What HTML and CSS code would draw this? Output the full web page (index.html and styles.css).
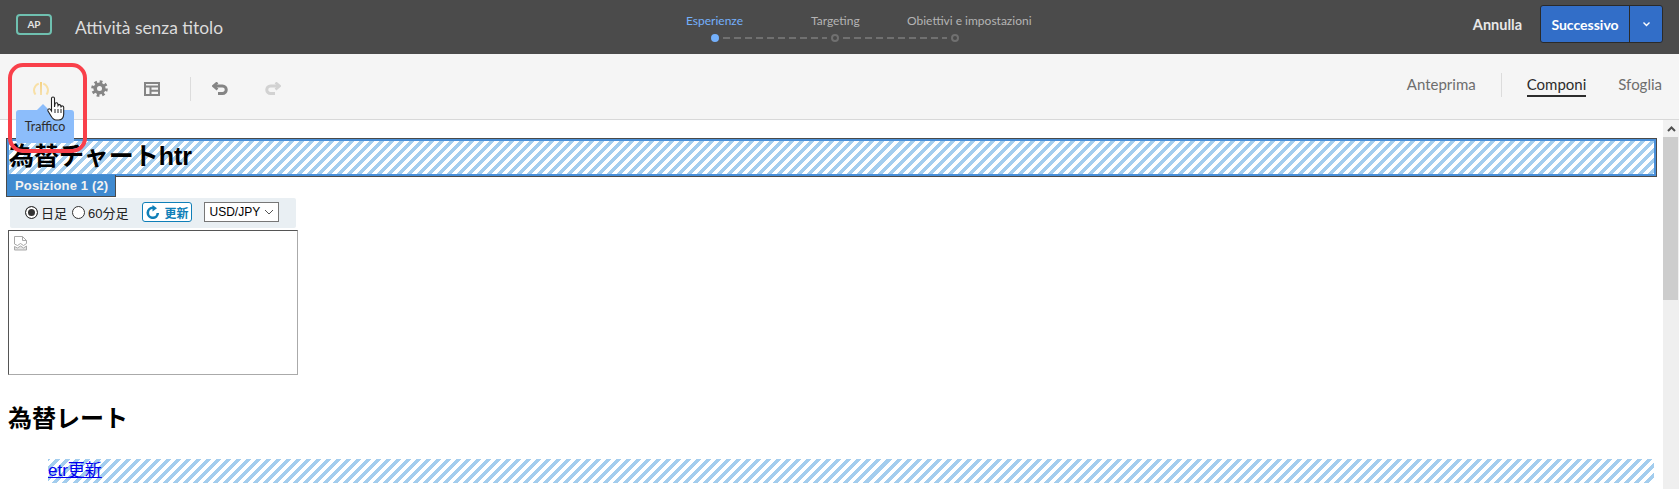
FILE: index.html
```html
<!DOCTYPE html>
<html lang="it">
<head>
    <meta charset="UTF-8">
    <title>Attività senza titolo</title>
    <link rel="stylesheet" href="styles.css">
</head>
<body>
    <header class="topbar">
        <div class="topbar-left">
            <span class="ap-badge">AP</span>
            <span class="activity-title">Attività senza titolo</span>
        </div>
        <div class="stepper">
            <div class="step-labels">
                <span class="step-label step-label-active">Esperienze</span>
                <span class="step-label">Targeting</span>
                <span class="step-label">Obiettivi e impostazioni</span>
            </div>
            <div class="step-track">
                <span class="step-dot step-dot-active"></span>
                <span class="step-line"></span>
                <span class="step-dot"></span>
                <span class="step-line"></span>
                <span class="step-dot"></span>
            </div>
        </div>
        <div class="topbar-right">
            <span class="cancel">Annulla</span>
            <div class="next-btn">
                <span class="next-label">Successivo</span>
                <span class="next-arrow">
                    <svg width="9" height="6" viewBox="0 0 9 6"><path d="M1.500 1.500 4.500 4.500 7.500 1.500" fill="none" stroke="#fff" stroke-width="1.400"/></svg>
                </span>
            </div>
        </div>
    </header>

    <div class="toolbar">
        <div class="tools">
            <span class="tool tool-traffic">
                <svg width="16" height="13" viewBox="0 0 16 13"><path d="M2.500 12.500A7 7 0 0 1 5.800 1.600M13.500 12.500A7 7 0 0 0 10.200 1.600" fill="none" stroke="#f8e0a6" stroke-width="2"/><path d="M7 0h2l-.4 13h-1.200z" fill="#f5d283"/></svg>
            </span>
            <span class="tool">
                <svg width="17" height="17" viewBox="0 0 17 17"><circle cx="8.500" cy="8.500" r="4.300" fill="none" stroke="#858585" stroke-width="3.600"/><circle cx="8.500" cy="8.500" r="6.800" fill="none" stroke="#858585" stroke-width="3" stroke-dasharray="2.670 2.670"/></svg>
            </span>
            <span class="tool">
                <svg width="16" height="14" viewBox="0 0 16 14"><path d="M1 1h14v12H1zM1 4.500h14M6.500 4.500V13M6.500 8.800H15" fill="none" stroke="#858585" stroke-width="2"/></svg>
            </span>
            <span class="tool-sep"></span>
            <span class="tool">
                <svg width="16" height="13" viewBox="0 0 16 13"><path d="M5.500 .5 1.500 4l4 3.500" fill="none" stroke="#858585" stroke-width="2.600"/><path d="M2 4h8.500a3.500 3.500 0 0 1 0 7.500H6" fill="none" stroke="#858585" stroke-width="3"/></svg>
            </span>
            <span class="tool">
                <svg width="16" height="13" viewBox="0 0 16 13"><path d="M10.500 .5l4 3.500-4 3.500" fill="none" stroke="#d2d2d2" stroke-width="2.600"/><path d="M14 4H5.500a3.500 3.500 0 0 0 0 7.500H10" fill="none" stroke="#d2d2d2" stroke-width="3"/></svg>
            </span>
        </div>
        <nav class="view-tabs">
            <span class="view-tab">Anteprima</span>
            <span class="view-sep"></span>
            <span class="view-tab view-tab-active">Componi</span>
            <span class="view-tab">Sfoglia</span>
        </nav>
    </div>

    <main class="stage">
        <div class="page">
            <div class="zone-title">
                <h1 class="page-h1">為替チャートhtr</h1>
            </div>
            <div class="zone-tag">Posizione 1 (2)</div>
            <div class="chart-controls">
                <label class="radio-item"><span class="radio radio-on"></span>日足</label>
                <label class="radio-item"><span class="radio"></span>60分足</label>
                <span class="refresh-btn">
                    <svg width="14" height="14" viewBox="0 0 14 14"><path d="M11.800 8A5 5 0 1 1 7 2.800" fill="none" stroke="#0f7fb8" stroke-width="2.600"/><path d="M6.500 0v6.500l4.500-3.200z" fill="#0f7fb8"/></svg>
                    更新
                </span>
                <span class="pair-select">USD/JPY
                    <svg width="10" height="6" viewBox="0 0 10 6"><path d="M1 1l4 4 4-4" fill="none" stroke="#555"/></svg>
                </span>
            </div>
            <div class="chart-box">
                <svg class="broken-img" width="13" height="15" viewBox="0 0 13 15"><path d="M.5.500h8l4 4v3l-3 2-3-2-3 2-3-1.500z" fill="#fff" stroke="#a9a9a9"/><path d="M8.500.5v4h4" fill="none" stroke="#a9a9a9"/><path d="M.5 10.500l3 1.500 3-2 3 2 3-2v4H.5z" fill="#e4e4e4" stroke="#a9a9a9"/></svg>
            </div>
            <h2 class="rate-heading">為替レート</h2>
            <div class="rate-row"><a class="rate-link" href="#">etr更新</a></div>
        </div>
        <div class="scrollbar">
            <span class="scroll-up">
                <svg width="9" height="6" viewBox="0 0 9 6"><path d="M1 5l3.500-3.500L8 5" fill="none" stroke="#505050" stroke-width="2"/></svg>
            </span>
            <span class="scroll-thumb"></span>
        </div>
    </main>

    <div class="traffic-tip">Traffico</div>
    <div class="callout"></div>
    <svg class="hand-cursor" width="22" height="26" viewBox="0 0 22 26"><path d="M5.500 2.500a1.500 1.500 0 0 1 3 0V11l.5-3a1.400 1.400 0 0 1 2.800.2l.2 1.300a1.400 1.400 0 0 1 2.700.3l.3 1a1.400 1.400 0 0 1 2.700.5V18c0 3.500-2 6-5 6H10c-2.500 0-3.500-1.500-5-4l-3-5c-.8-1.500 1-3 2.300-1.700L5.500 15z" fill="#fff" stroke="#222" stroke-width="1.100"/><path d="M9 13v4M12 13v4M15 13v4" stroke="#222"/></svg>
</body>
</html>
```

FILE: styles.css
```css
html, body {
    margin: 0;
    padding: 0;
    height: 489px;
    overflow: hidden;
}

body {
    position: relative;
    display: flex;
    flex-direction: column;
    font-family: Lato, "Open Sans", sans-serif;
    background-color: #fff;
}

/* top bar */
.topbar {
    height: 54px;
    flex: none;
    display: flex;
    align-items: center;
    background-color: #4b4b4b;
    position: relative;
}

.topbar-left {
    display: flex;
    align-items: center;
    padding-left: 16px;
}

.ap-badge {
    box-sizing: border-box;
    width: 36px;
    height: 21px;
    margin-top: -6px;
    border: 2px solid #6fc0b0;
    border-radius: 4px;
    color: #e4e4e4;
    font-size: 10px;
    font-weight: 700;
    display: flex;
    align-items: center;
    justify-content: center;
}

.activity-title {
    margin-left: 23px;
    font-size: 17.400px;
    color: #dcdcdc;
}

.stepper {
    position: absolute;
    left: 686px;
    top: 12px;
    width: 350px;
}

.step-labels {
    display: flex;
    font-size: 12px;
    line-height: 17px;
    color: #b4b4b4;
    white-space: nowrap;
}

.step-label:nth-child(1) { width: 125px; }
.step-label:nth-child(2) { width: 96px; }

.step-label-active {
    color: #74b0fb;
}

.step-track {
    display: flex;
    align-items: center;
    margin: 5px 0 0 25px;
    width: 248px;
}

.step-dot {
    box-sizing: border-box;
    width: 8px;
    height: 8px;
    border: 2px solid #707070;
    border-radius: 50%;
    flex: none;
}

.step-dot-active {
    background-color: #74b0fb;
    border-color: #74b0fb;
}

.step-line {
    flex: 1;
    height: 2px;
    margin: 0 4px;
    background: repeating-linear-gradient(90deg, #707070 0, #707070 7px, transparent 7px, transparent 11px);
}

.topbar-right {
    margin-left: auto;
    display: flex;
    align-items: center;
    padding-right: 16px;
    margin-top: -6px;
}

.cancel {
    color: #e8e8e8;
    font-size: 14.500px;
    font-weight: 700;
    margin-right: 18px;
}

.next-btn {
    display: flex;
    height: 38px;
    background-color: #326ec8;
    border: 1px solid #2a2a2a;
    border-radius: 3px;
    box-sizing: border-box;
    color: #fff;
    font-size: 14px;
    font-weight: 700;
}

.next-label {
    width: 88px;
    display: flex;
    align-items: center;
    justify-content: center;
    border-right: 1px solid #2a2a2a;
}

.next-arrow {
    width: 32px;
    display: flex;
    align-items: center;
    justify-content: center;
}

/* toolbar */
.toolbar {
    height: 65px;
    flex: none;
    display: flex;
    align-items: center;
    justify-content: space-between;
    background-color: #f5f5f5;
    border-bottom: 1px solid #d8d8d8;
}

.tools {
    display: flex;
    align-items: center;
    padding-left: 32px;
    margin-top: 4px;
}

.tool {
    display: flex;
    justify-content: center;
    width: 18px;
    margin-right: 35px;
}

.tool-traffic {
    margin-right: 40px;
}

.tool-sep {
    width: 1px;
    height: 24px;
    background-color: #dcdcdc;
    margin: 0 20px 0 -6px;
}

.view-tabs {
    display: flex;
    align-items: center;
    padding-right: 17px;
    font-size: 15px;
    color: #6e6e6e;
    margin-top: -4px;
}

.view-tab {
    padding: 3px 0 2px;
    border-bottom: 2px solid transparent;
}

.view-sep {
    width: 1px;
    height: 24px;
    background-color: #dcdcdc;
    margin: 0 25px;
}

.view-tab-active {
    color: #2c2c2c;
    border-bottom-color: #2c2c2c;
    margin-right: 32px;
}

/* page preview */
.stage {
    flex: 1;
    display: flex;
    min-height: 0;
    overflow: hidden;
}

.page {
    flex: 1;
    min-width: 0;
    padding: 18px 6px 0 6px;
    font-family: "Liberation Sans", "Noto Sans CJK JP", sans-serif;
    color: #000;
}

.zone-title {
    height: 39px;
    box-sizing: border-box;
    border: 1px solid #4a4a4a;
    box-shadow: inset 0 0 0 2px #4a90d9;
    padding: 1px 0 0 2px;
    background: repeating-linear-gradient(-45deg, #fff 0, #fff 3.540px, #a3cdee 3.540px, #a3cdee 7.080px);
}

.page-h1 {
    margin: 0;
    font-size: 25px;
    line-height: 32px;
    font-weight: 700;
}

.zone-tag {
    position: relative;
    width: 110px;
    height: 22px;
    margin-top: -2px;
    box-sizing: border-box;
    padding: 1px 0 0 8px;
    background-color: #3f8ad0;
    border: 1px solid #4a4a4a;
    border-top: 0;
    color: #f2f2f2;
    font-size: 13px;
    font-weight: 700;
    line-height: 19px;
    letter-spacing: 0.15px;
}

.chart-controls {
    display: flex;
    align-items: center;
    width: 286px;
    height: 30px;
    margin: 1px 0 2px 4px;
    padding: 0 0 2px 15px;
    box-sizing: border-box;
    background-color: #e9eff3;
    border-radius: 2px;
    font-size: 13px;
    color: #222;
}

.radio-item {
    display: flex;
    align-items: center;
    margin-right: 5px;
}

.radio {
    box-sizing: border-box;
    width: 13px;
    height: 13px;
    margin-right: 3px;
    border: 1px solid #333;
    border-radius: 50%;
    background-color: #fff;
}

.radio-on {
    background-color: #333;
    box-shadow: inset 0 0 0 2px #fff;
}

.refresh-btn {
    display: flex;
    align-items: center;
    gap: 4px;
    box-sizing: border-box;
    height: 20px;
    width: 50px;
    margin-left: 9px;
    padding-left: 3px;
    border: 1px solid #0f7fb8;
    border-radius: 3px;
    background-color: #fff;
    color: #0f7fb8;
    font-size: 12px;
    font-weight: 700;
}

.pair-select {
    display: flex;
    align-items: center;
    justify-content: space-between;
    box-sizing: border-box;
    width: 75px;
    height: 20px;
    margin-left: 12px;
    padding: 0 4px;
    border: 1px solid #777;
    background-color: #fff;
    color: #000;
    font-size: 12px;
}

.chart-box {
    width: 290px;
    height: 145px;
    margin-left: 2px;
    box-sizing: border-box;
    border: 1px solid;
    border-color: #555 #aaa #aaa #555;
    padding: 5px;
    background-color: #fff;
}

.broken-img {
    display: block;
}

.rate-heading {
    margin: 29px 0 0 2px;
    font-size: 24px;
    line-height: 30px;
    font-weight: 700;
}

.rate-row {
    margin: 25px 3px 0 42px;
    height: 24px;
    line-height: 24px;
    font-size: 17px;
    background: repeating-linear-gradient(-45deg, #fff 0, #fff 3.540px, #a3cdee 3.540px, #a3cdee 7.080px);
}

.rate-link {
    color: #0000ee;
}

.scrollbar {
    width: 16px;
    flex: none;
    display: flex;
    flex-direction: column;
    background-color: #efefef;
}

.scroll-up {
    height: 17px;
    flex: none;
    display: flex;
    align-items: center;
    justify-content: center;
    background-color: #f2f2f2;
}

.scroll-thumb {
    height: 163px;
    margin-right: 1px;
    background-color: #cdcdcd;
}

/* things lying over the page */
.traffic-tip {
    position: absolute;
    left: 16px;
    top: 110px;
    width: 58px;
    height: 33px;
    box-sizing: border-box;
    padding-top: 9px;
    background-color: #8cbdfb;
    border-radius: 3px;
    color: #2c2c2c;
    font-size: 12.500px;
    text-align: center;
}

.traffic-tip::before {
    content: "";
    position: absolute;
    left: 21px;
    top: -6px;
    border: 6px solid transparent;
    border-top: 0;
    border-bottom-color: #8cbdfb;
}

.callout {
    position: absolute;
    left: 8px;
    top: 63px;
    width: 79px;
    height: 90px;
    box-sizing: border-box;
    border: 4px solid #f9404a;
    border-radius: 15px;
}

.hand-cursor {
    position: absolute;
    left: 46px;
    top: 96px;
}
```
